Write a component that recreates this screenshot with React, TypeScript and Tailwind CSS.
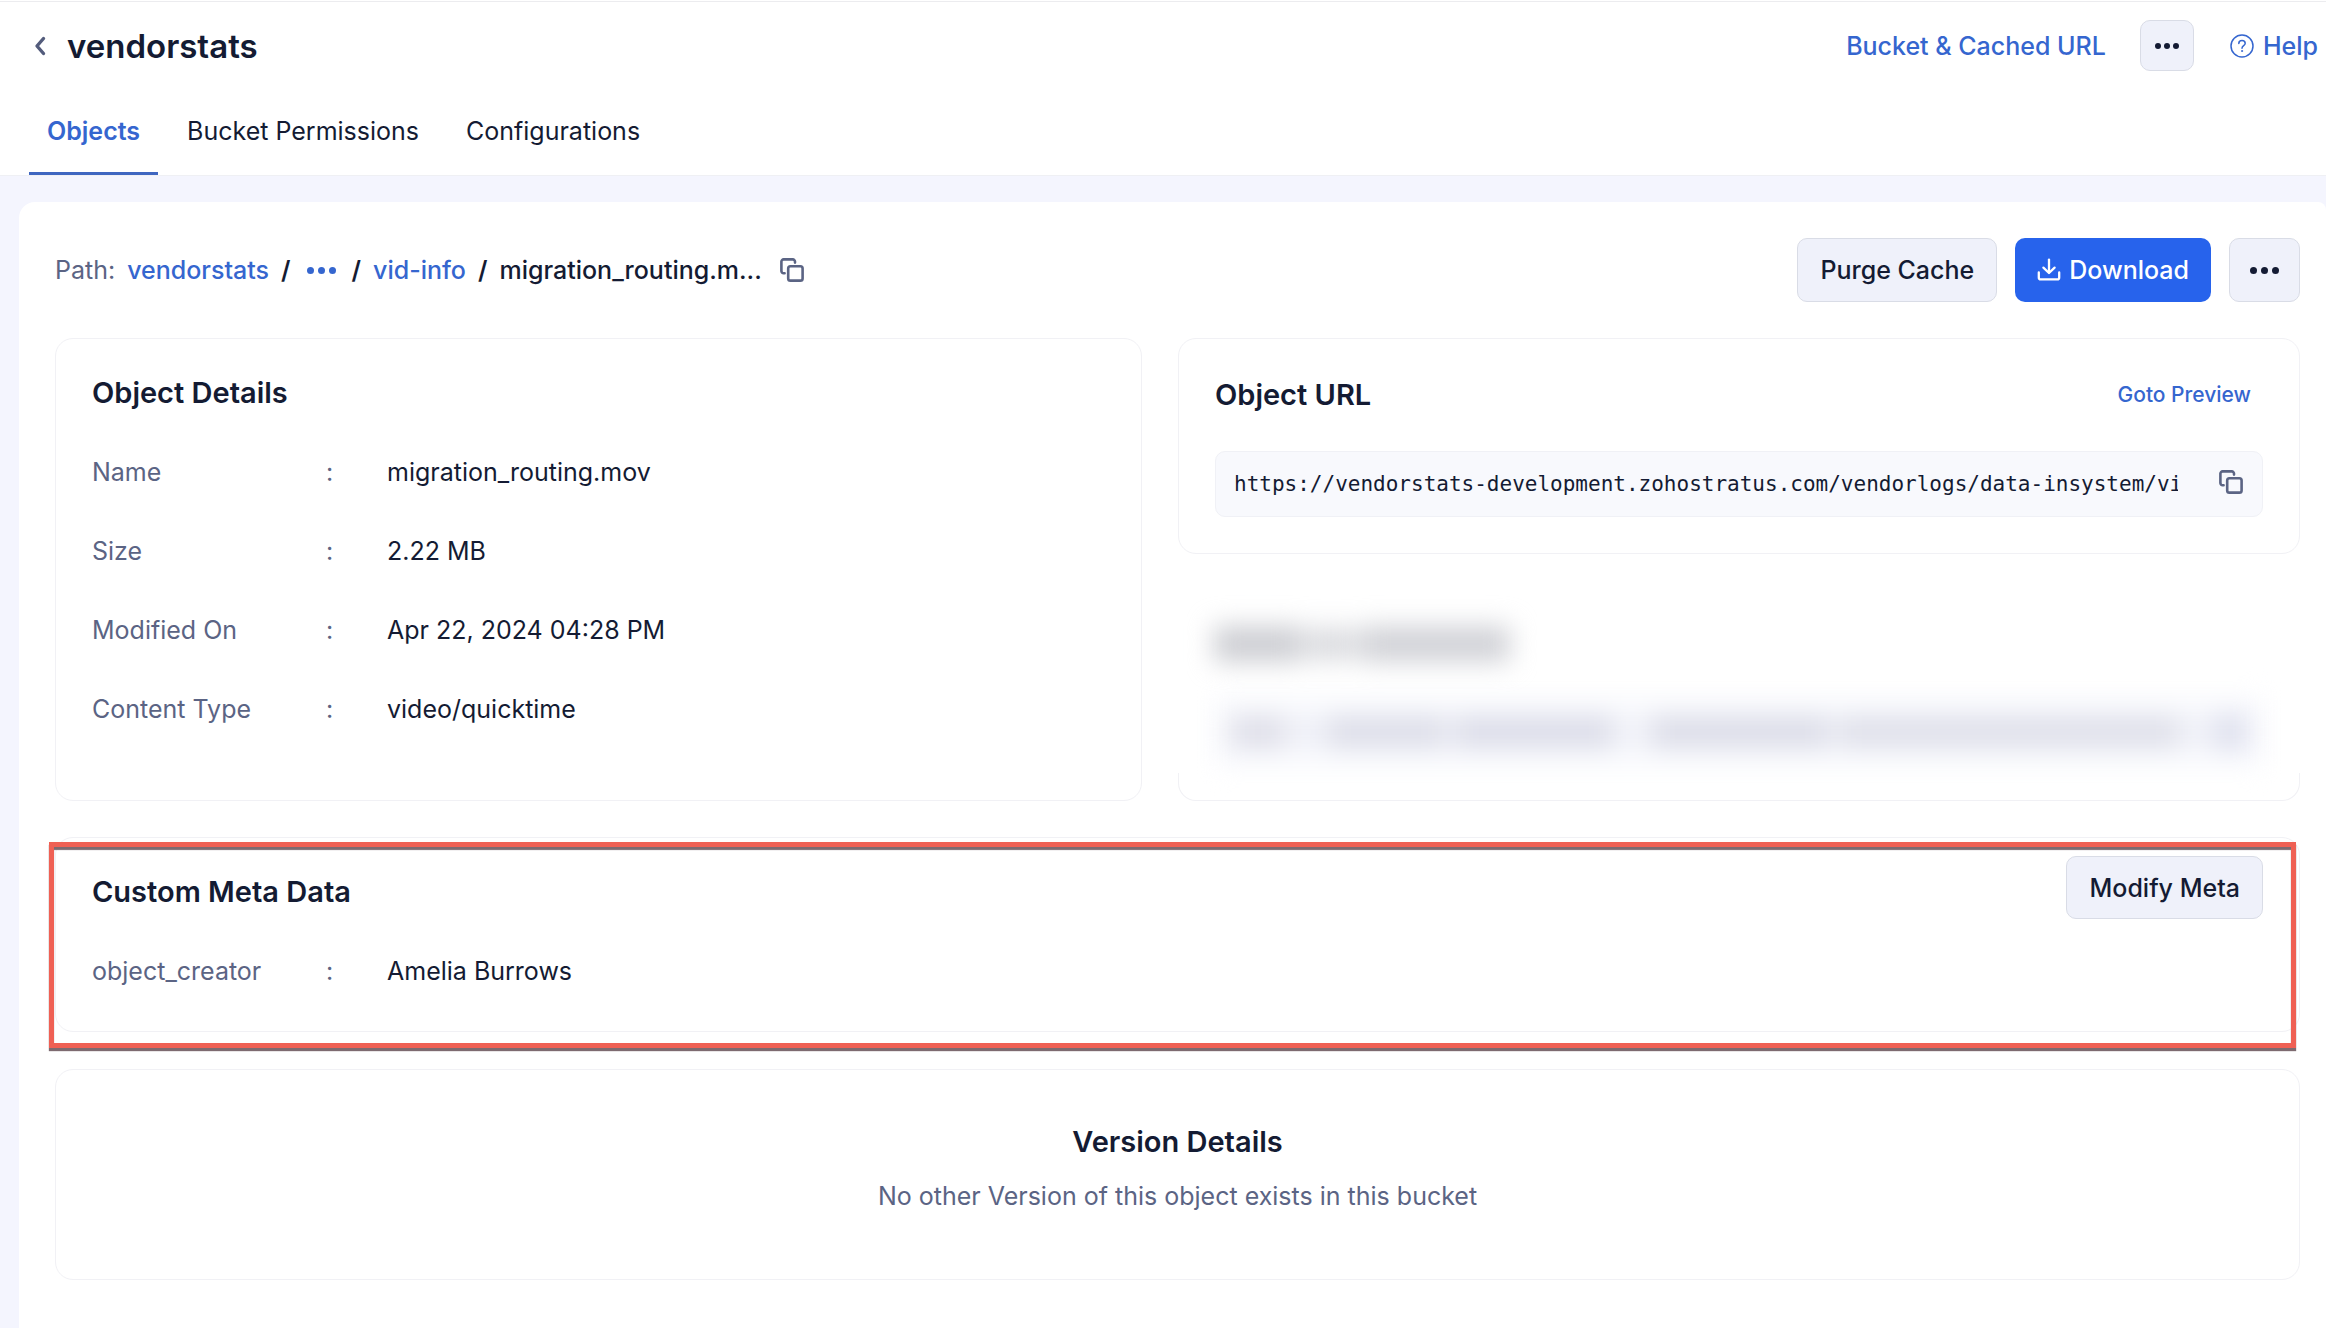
import type { ReactNode } from "react";

function Dots({ className, size = 6, gap = 3 }: { className: string; size?: number; gap?: number }) {
  const r = size / 2;
  const step = size + gap;
  return (
    <svg width={size * 3 + gap * 2} height={size} className={className} fill="currentColor" aria-hidden="true">
      <circle cx={r} cy={r} r={r} />
      <circle cx={r + step} cy={r} r={r} />
      <circle cx={r + step * 2} cy={r} r={r} />
    </svg>
  );
}

function ChevronIcon() {
  return (
    <svg width="14" height="20" viewBox="0 0 14 20" fill="none" stroke="currentColor" strokeWidth="3.4" strokeLinecap="round" strokeLinejoin="round" aria-hidden="true">
      <path d="M10.5 2.5 4 10l6.5 7.5" />
    </svg>
  );
}

function HelpIcon() {
  return (
    <svg width="24" height="24" viewBox="0 0 24 24" fill="none" stroke="currentColor" strokeWidth="1.5" strokeLinecap="round" aria-hidden="true">
      <circle cx="12" cy="12" r="11" />
      <path d="M8.8 9.4c0-1.9 1.4-3 3.2-3s3.2 1.1 3.2 2.8c0 2.5-3.2 2.4-3.2 5" />
      <circle cx="12" cy="17" r="0.6" fill="currentColor" strokeWidth="0.8" />
    </svg>
  );
}

function CopyIcon() {
  return (
    <svg width="24" height="24" viewBox="0 0 24 24" fill="none" stroke="currentColor" strokeWidth="2.6" strokeLinecap="round" strokeLinejoin="round" aria-hidden="true">
      <rect x="8.2" y="8.2" width="14.4" height="14.4" rx="2.2" />
      <path d="M4.6 15.2H3.6a2.2 2.2 0 0 1-2.2-2.2V3.6a2.2 2.2 0 0 1 2.2-2.2h9.2A2.2 2.2 0 0 1 15 3.6v1" />
    </svg>
  );
}

function DownloadIcon() {
  return (
    <svg width="24" height="24" viewBox="0 0 24 24" fill="none" stroke="currentColor" strokeWidth="2.3" strokeLinecap="round" strokeLinejoin="round" aria-hidden="true">
      <path d="M12 1.6v13" />
      <path d="M6.4 9.6 12 15l5.6-5.4" />
      <path d="M1.8 14.4v5a2 2 0 0 0 2 2h16.4a2 2 0 0 0 2-2v-5" />
    </svg>
  );
}

const card = "rounded-[18px] border border-[#f1f1f5]";
const softButton =
  "flex items-center justify-center rounded-[10px] border border-[#d9dce6] bg-[#eff1fa] font-medium text-[#141b33]";

function DetailRow({ label, value }: { label: string; value: string }) {
  return (
    <div className="grid grid-cols-[234px_61px_1fr]">
      <dt className="text-[#5b6484]">{label}</dt>
      <span className="text-[#5b6484]" aria-hidden="true">:</span>
      <dd>{value}</dd>
    </div>
  );
}

function Tab({ active, children }: { active?: boolean; children: ReactNode }) {
  return (
    <button
      type="button"
      role="tab"
      aria-selected={!!active}
      className={
        active
          ? "border-b-[3px] border-[#3f66c0] px-[18px] pb-[25px] font-semibold text-[#3566cf]"
          : "border-b-[3px] border-transparent px-[18px] pb-[25px]"
      }
    >
      {children}
    </button>
  );
}

const details = [
  { label: "Name", value: "migration_routing.mov" },
  { label: "Size", value: "2.22 MB" },
  { label: "Modified On", value: "Apr 22, 2024 04:28 PM" },
  { label: "Content Type", value: "video/quicktime" },
];

export default function App() {
  return (
    <div className="flex min-h-screen flex-col overflow-x-hidden bg-[#f4f5fe] font-[Inter,sans-serif] text-[25px] leading-8 text-[#141b33]">
      <header className="border-b border-[#eff0f4] bg-white">
        <div className="h-0.5 border-b border-[#ececef]" />
        <div className="flex items-center justify-between pt-[18px] pr-2 pl-[33px]">
          <div className="flex items-center gap-5">
            <button type="button" aria-label="Back" className="text-[#535c7c]">
              <ChevronIcon />
            </button>
            <h1 className="text-[33px] leading-10 font-semibold">vendorstats</h1>
          </div>
          <div className="flex items-center font-medium text-[#3566cf]">
            <a href="#bucket-url">Bucket &amp; Cached URL</a>
            <button type="button" aria-label="More bucket actions" className={`${softButton} mr-9 ml-[34px] h-[51px] w-[54px]`}>
              <Dots className="text-[#141b33]" />
            </button>
            <a href="#help" className="flex items-center gap-[9px]">
              <HelpIcon />
              Help
            </a>
          </div>
        </div>
        <div role="tablist" className="flex gap-[11px] pt-11 pl-[29px]">
          <Tab active>Objects</Tab>
          <Tab>Bucket Permissions</Tab>
          <Tab>Configurations</Tab>
        </div>
      </header>

      <div className="flex flex-1 flex-col pt-[26px] pl-[19px]">
        <main className="flex-1 rounded-tl-2xl rounded-tr-lg bg-white pt-9 pr-[26px] pb-12 pl-9">
          <div className="flex items-center justify-between">
            <nav aria-label="Path" className="flex items-center gap-3 font-medium">
              <span className="font-normal text-[#5b6484]">Path:</span>
              <a href="#vendorstats" className="text-[#3566cf]">vendorstats</a>
              <span className="font-semibold">/</span>
              <button type="button" aria-label="Show hidden folders" className="mx-1 text-[#3566cf]">
                <Dots className="block" size={7} gap={4} />
              </button>
              <span className="font-semibold">/</span>
              <a href="#vid-info" className="text-[#3566cf]">vid-info</a>
              <span className="font-semibold">/</span>
              <span>migration_routing.m...</span>
              <button type="button" aria-label="Copy path" className="ml-1.5 text-[#5b6484]">
                <CopyIcon />
              </button>
            </nav>
            <div className="flex gap-[18px]">
              <button type="button" className={`${softButton} h-16 px-[22px]`}>
                Purge Cache
              </button>
              <button type="button" className="flex h-16 items-center gap-2 rounded-[10px] bg-[#2763ec] px-[22px] font-medium text-white">
                <DownloadIcon />
                Download
              </button>
              <button type="button" aria-label="More object actions" className={`${softButton} h-16 w-[71px]`}>
                <Dots className="text-[#141b33]" size={7} gap={4} />
              </button>
            </div>
          </div>

          <div className="mt-9 grid grid-cols-[1087fr_1122fr] gap-9">
            <section className={`${card} px-9 pt-9 pb-[75px]`}>
              <h2 className="text-[29px] leading-9 font-semibold">Object Details</h2>
              <dl className="mt-[45px] flex flex-col gap-[47px]">
                {details.map((d) => (
                  <DetailRow key={d.label} label={d.label} value={d.value} />
                ))}
              </dl>
            </section>

            <div className="flex min-w-0 flex-col">
              <section className={`${card} px-9 pt-[38px] pb-9`}>
                <div className="flex items-center justify-between">
                  <h2 className="text-[29px] leading-9 font-semibold">Object URL</h2>
                  <a href="#preview" className="mr-3 text-[21px] font-medium text-[#3566cf]">Goto Preview</a>
                </div>
                <div className="mt-[38px] flex h-[66px] items-center rounded-[10px] border border-[#f0f1f6] bg-[#f8f9fd] pr-[19px] pl-[18px]">
                  <input
                    readOnly
                    aria-label="Object URL"
                    value="https://vendorstats-development.zohostratus.com/vendorlogs/data-insystem/vid-info/migration_routing.mov"
                    className="mr-[41px] min-w-0 flex-1 bg-transparent font-['DejaVu_Sans_Mono',monospace] text-[21px] outline-none"
                  />
                  <button type="button" aria-label="Copy object URL" className="mb-1 text-[#5b6484]">
                    <CopyIcon />
                  </button>
                </div>
              </section>

              <section aria-hidden="true" className="flex flex-1 flex-col">
                <div className="flex-1 px-9 pt-[70px]">
                  <div className="flex h-10 w-[296px] items-center gap-1 blur-[13px]">
                    <div className="h-9 w-[88px] bg-[#cdced3]" />
                    <div className="h-8 flex-1 bg-[#dadbdf]" />
                    <div className="h-9 w-[150px] bg-[#d1d2d7]" />
                  </div>
                  <div className="mt-[34px] flex h-[68px] items-center gap-2 bg-[#f8f9fd] px-4 blur-[13px]">
                    <div className="h-8 w-14 bg-[#dfdfe9]" />
                    <div className="h-6 w-6 bg-[#ebecf5]" />
                    <div className="h-8 w-[120px] bg-[#dddee9]" />
                    <div className="h-8 w-[160px] bg-[#dcdde9]" />
                    <div className="h-6 w-5 bg-[#eeeff7]" />
                    <div className="h-8 w-[180px] bg-[#dcdde8]" />
                    <div className="h-8 flex-1 bg-[#dfe0ea]" />
                    <div className="h-6 w-4 bg-[#ebecf5]" />
                    <div className="h-9 w-9 bg-[#dfe1ee]" />
                  </div>
                </div>
                <div className="h-7 rounded-b-[18px] border border-t-0 border-[#f1f1f5]" />
              </section>
            </div>
          </div>

          <section className={`${card} relative mt-9 px-9 pt-[18px] pb-11`}>
            <div className="flex items-center justify-between">
              <h2 className="pt-2 text-[29px] leading-9 font-semibold">Custom Meta Data</h2>
              <button type="button" className={`${softButton} h-[63px] px-[22px]`}>
                Modify Meta
              </button>
            </div>
            <dl className="mt-9">
              <DetailRow label="object_creator" value="Amelia Burrows" />
            </dl>
            <div className="pointer-events-none absolute top-1 right-[3px] -bottom-[17px] -left-[7px] border-[5px] border-[#ef6054] shadow-[0_3px_1px_#7d6a70,inset_0_3px_1px_#7d6a70]" />
          </section>

          <section className={`${card} mt-[37px] px-9 pt-[54px] pb-[67px] text-center`}>
            <h2 className="text-[29px] leading-9 font-semibold">Version Details</h2>
            <p className="mt-5 text-[#5b6484]">No other Version of this object exists in this bucket</p>
          </section>
        </main>
      </div>
    </div>
  );
}
